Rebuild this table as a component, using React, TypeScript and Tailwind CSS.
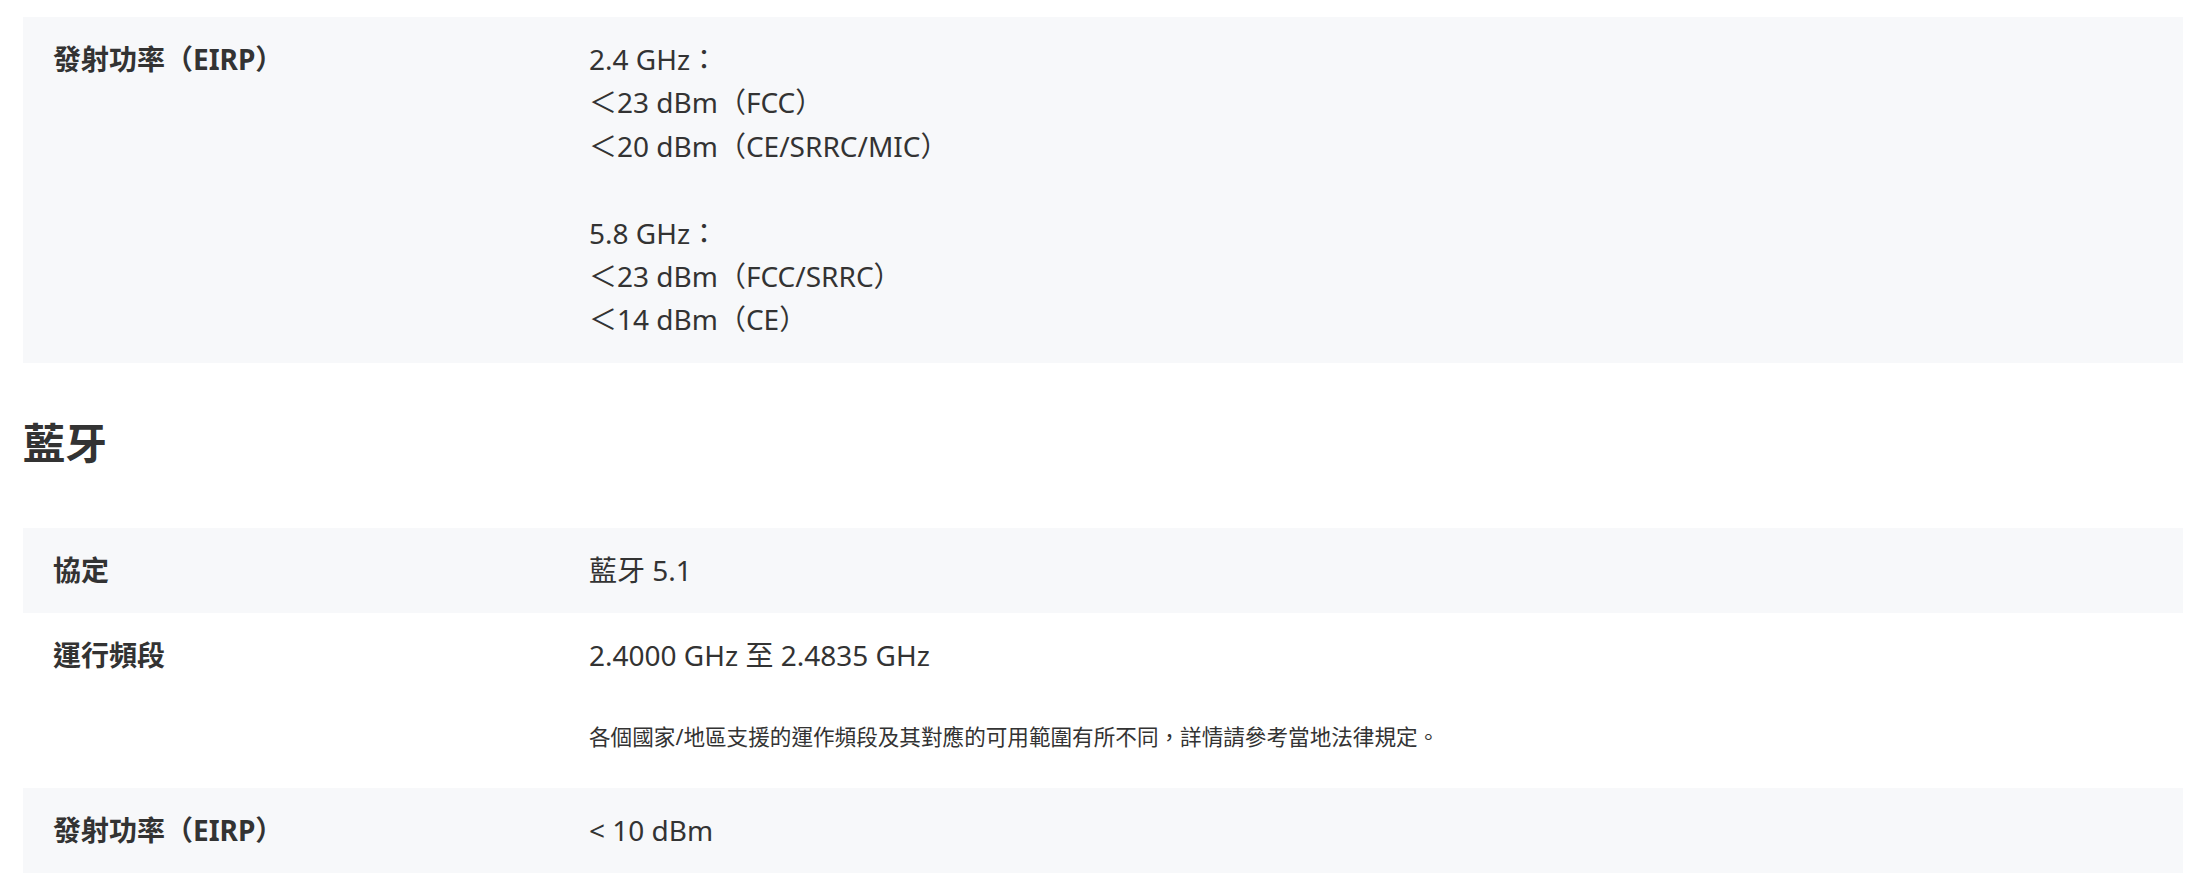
import React from 'react';

// spec rows for the wireless section
interface SpecRow {
  label: string;
  lines: string[];
  note?: string;
  shaded: boolean;
}

const wifiPower: SpecRow = {
  label: '發射功率（EIRP）',
  lines: [
    '2.4 GHz：',
    '＜23 dBm（FCC）',
    '＜20 dBm（CE/SRRC/MIC）',
    '',
    '5.8 GHz：',
    '＜23 dBm（FCC/SRRC）',
    '＜14 dBm（CE）',
  ],
  shaded: true,
};

const bluetoothRows: SpecRow[] = [
  { label: '協定', lines: ['藍牙 5.1'], shaded: true },
  {
    label: '運行頻段',
    lines: ['2.4000 GHz 至 2.4835 GHz'],
    note: '各個國家/地區支援的運作頻段及其對應的可用範圍有所不同，詳情請參考當地法律規定。',
    shaded: false,
  },
  { label: '發射功率（EIRP）', lines: ['< 10 dBm'], shaded: true },
];

const Row: React.FC<{ row: SpecRow }> = ({ row }) => (
  <div
    className={`grid grid-cols-[536px_1fr] px-[30px] py-[21px] ${row.shaded ? 'bg-[#f7f8fa]' : 'bg-white'}`}
  >
    <div className="text-[28px] leading-[43.4px] font-bold text-[#333333]">{row.label}</div>
    <div className="text-[28px] leading-[43.4px] text-[#333333]">
      {row.lines.map((line, i) => (
        <div key={i} className="h-[43.4px] whitespace-pre">
          {line}
        </div>
      ))}
      {row.note && (
        <p className="mt-[43px] mb-[15px] text-[21.6px] leading-[31px] text-[#333333]">{row.note}</p>
      )}
    </div>
  </div>
);

export default function App() {
  return (
    <div
      className="min-h-screen bg-white"
      style={{ fontFamily: '"Noto Sans", "Noto Sans CJK TC", sans-serif' }}
    >
      <div className="ml-[23px] w-[2160px] pt-[17px]">
        <Row row={wifiPower} />

        <div className="h-[165px] flex items-center pb-[5px]">
          <h2 className="text-[42px] leading-[54px] font-bold text-[#333333]">藍牙</h2>
        </div>

        {bluetoothRows.map((row, i) => (
          <Row key={i} row={row} />
        ))}
      </div>
    </div>
  );
}
